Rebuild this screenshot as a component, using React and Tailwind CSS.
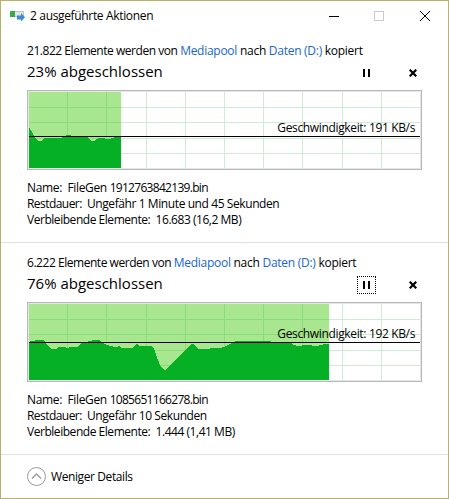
const COLUMNS = [38, 77, 117, 156, 195, 234, 273, 313, 352];
const ROWS = [15, 30, 46, 61];

const jobs = [
  {
    count: '21.822',
    percent: 23,
    file: '1912763842139.bin',
    remaining: 'Ungefähr 1 Minute und 45 Sekunden',
    items: '16.683 (16,2 MB)',
    speed: '191 KB/s',
    filled: 92,
    lineY: 44,
    focused: false,
    points:
      '0,36 1,37 3,40 5,44 7,47 9,49 12,49 14,47 16,45.5 33,45.5 35,44 38,43 41,43 42,44 59,45 60,47 63,49 65,49 68,47 71,45.5 75,45.5 77,47 81,47 85,45.5 92,45',
  },
  {
    count: '6.222',
    percent: 76,
    file: '1085651166278.bin',
    remaining: 'Ungefähr 10 Sekunden',
    items: '1.444 (1,41 MB)',
    speed: '192 KB/s',
    filled: 300,
    lineY: 38,
    focused: true,
    points:
      '0,37.7 5,37 9,35.5 14,36 16,38 20,43 23,45 27,45 30,43 36,43 38,44 41,43 48,43 53,39 61,37 64,36 70,36 72,38 76,40 81,42 87,43 90,42 92,44 103,44 105,42 108,40 111,42 122,42 125,45 129,56 132,63 135,66 137,66 141,61 158,44 162,40 164,40 169,45 180,45 182,44 191,44 196,42.7 201,40 207,37 241,37 243,38 262,39 265,41 268,42 272,42 274,41 278,41 288,42 291,41 297,40 300,40',
  },
];

function GridLines({ color }) {
  return (
    <g fill={color}>
      {COLUMNS.map((x) => <rect key={x} x={x} y="0" width="1" height="76" />)}
      {ROWS.map((y) => <rect key={y} x="0" y={y} width="391" height="1" />)}
    </g>
  );
}

function SpeedChart({ job }) {
  const clip = `filled-${job.percent}`;
  return (
    <div className="relative h-20 w-[395px] border border-[#b8b8b8] bg-white">
      <div className="h-full border border-[#e6e6e6]">
        <svg width="391" height="76" viewBox="0 0 391 76" className="block" shapeRendering="crispEdges">
          <clipPath id={clip}>
            <rect width={job.filled} height="76" />
          </clipPath>
          <GridLines color="#cdebd5" />
          <g clipPath={`url(#${clip})`}>
            <rect width="391" height="76" fill="#a8e690" />
            <GridLines color="#8bdb7d" />
            <polygon points={`0,76 ${job.points} ${job.filled},76`} fill="#06b025" />
          </g>
          <rect x="0" y={job.lineY} width="391" height="1" fill="#000" />
        </svg>
      </div>
      <span
        className="absolute right-[6px] text-[12px] leading-4 tracking-[-0.35px]"
        style={{ top: job.lineY - 15 }}
      >
        Geschwindigkeit: {job.speed}
      </span>
    </div>
  );
}

function JobSection({ job }) {
  return (
    <section className="h-[212px] border-b border-[#dfdfdf] pl-[26px] pt-3">
      <p className="text-[12px] leading-4 tracking-[-0.27px]">
        <span className="tracking-[-0.46px]">{job.count} Elemente werden von </span>
        <span className="text-[#1a66c8]">Mediapool</span> nach{' '}
        <span className="text-[#1a66c8]">Daten (D:)</span> kopiert
      </p>
      <div className="mb-[6px] mt-[3px] flex h-[22px] items-center">
        <h2 className="w-[330px] self-start text-[15px] leading-[18px]">{job.percent}% abgeschlossen</h2>
        <button className={`flex h-[18px] w-[19px] items-center justify-center ${job.focused ? 'border border-dotted border-black' : ''}`}>
          <svg width="7" height="8" viewBox="0 0 7 8" shapeRendering="crispEdges">
            <path d="M0 0h2v8H0zM5 0h2v8H5z" />
          </svg>
        </button>
        <button className="ml-[33px]">
          <svg width="8" height="8" viewBox="0 0 8 8" stroke="#000" strokeWidth="2.2">
            <path d="M.7.7l6.6 6.6M7.3.7L.7 7.3" />
          </svg>
        </button>
      </div>
      <SpeedChart job={job} />
      <div className="pt-[10px] text-[12px] leading-4 tracking-[-0.46px]">
        <p>
          <span className="tracking-[-0.35px]">Name:&nbsp; FileGen </span>
          <span className="tracking-[-0.7px]">{job.file}</span>
        </p>
        <p>
          <span className="tracking-[-0.55px]">Restdauer:&nbsp; </span>
          <span className="tracking-[-0.41px]">{job.remaining}</span>
        </p>
        <p>Verbleibende Elemente:&nbsp; {job.items}</p>
      </div>
    </section>
  );
}

function TitleBar() {
  return (
    <header className="flex h-[30px] items-center pl-[9px]">
      <svg width="15" height="11" viewBox="0 0 15 11">
        <rect x=".5" y=".5" width="13" height="5" fill="#e4e4e4" stroke="#c4c4c4" />
        <rect x="0" y="0" width="5" height="6" fill="#39a94b" />
        <path d="M7 4.500h4V2l4 4.200-4 4.300V8.500H7z" fill="#3b8bd8" />
      </svg>
      <h1 className="ml-[5px] w-[294px] text-[12px] leading-4 tracking-[-0.34px]">2 ausgeführte Aktionen</h1>
      <svg width="110" height="11" viewBox="0 0 110 11" className="ml-[5px]" fill="none">
        <path d="M0 5.500h10" stroke="#000" />
        <rect x="45.500" y=".5" width="9" height="9" stroke="#ccc" />
        <path d="M91 0l10 10M101 0L91 10" stroke="#000" />
      </svg>
    </header>
  );
}

export default function App() {
  return (
    <div className="h-[499px] w-[449px] overflow-hidden whitespace-nowrap border border-[#b7b169] bg-white font-['Open_Sans','Noto_Sans',sans-serif] text-black">
      <TitleBar />
      {jobs.map((job) => <JobSection key={job.percent} job={job} />)}
      <footer className="flex h-[43px] items-center gap-[5px] pl-[26px]">
        <svg width="19" height="19" viewBox="0 0 19 19" fill="none" stroke="#999">
          <circle cx="9.500" cy="9.500" r="9" />
          <path d="M5 11.500l4.500-4.500 4.500 4.500" strokeWidth="1.400" />
        </svg>
        <span className="text-[12px] leading-4 tracking-[-0.4px]">Weniger Details</span>
      </footer>
    </div>
  );
}
